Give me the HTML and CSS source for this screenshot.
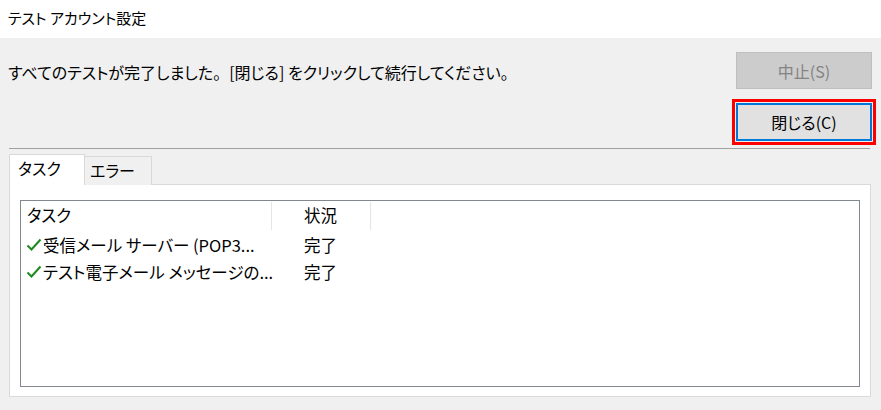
FILE: index.html
```html
<!DOCTYPE html>
<html lang="ja">
<head>
<meta charset="utf-8">
<title>テスト アカウント設定</title>
<link rel="stylesheet" href="styles.css">
</head>
<body>
<div class="window">
  <div class="titlebar">テスト アカウント設定</div>
  <div class="content">
    <div class="top-row">
      <div class="message">すべてのテストが完了しました<span class="fullstop">。</span>[閉じる] をクリックして続行してください。</div>
      <button class="btn btn-disabled" disabled>中止(S)</button>
    </div>
    <div class="close-row">
      <button class="btn btn-default">閉じる(C)</button>
    </div>
    <div class="separator"></div>
    <div class="tabs">
      <div class="tab tab-active">タスク</div>
      <div class="tab">エラー</div>
    </div>
    <div class="panel">
      <div class="list">
        <div class="list-header">
          <div class="col col-task">タスク</div>
          <div class="col col-status">状況</div>
        </div>
        <div class="list-row">
          <div class="col col-task"><svg class="check" viewBox="0 0 16 14" width="16" height="14"><path d="M1.5 7.5 L5.5 11.5 L14.5 1.5" fill="none" stroke="#1c8a1c" stroke-width="2"/></svg><span>受信メール サーバー (POP3...</span></div>
          <div class="col col-status">完了</div>
        </div>
        <div class="list-row">
          <div class="col col-task"><svg class="check" viewBox="0 0 16 14" width="16" height="14"><path d="M1.5 7.5 L5.5 11.5 L14.5 1.5" fill="none" stroke="#1c8a1c" stroke-width="2"/></svg><span>テスト電子メール メッセージの...</span></div>
          <div class="col col-status">完了</div>
        </div>
      </div>
    </div>
  </div>
</div>
</body>
</html>
```

FILE: styles.css
```css
* { box-sizing: border-box; }
html, body {
  margin: 0;
  padding: 0;
  background: #f0f0f0;
}
body {
  font-family: "Noto Sans CJK JP", "Noto Sans", sans-serif;
  font-feature-settings: "palt";
  color: #000;
  font-size: 16px;
  width: 881px;
  height: 410px;
  overflow: hidden;
}
.titlebar {
  height: 38px;
  background: #fff;
  padding: 0 0 3px 8px;
  display: flex;
  align-items: center;
  font-size: 15px;
}
.content {
  padding: 14px 0 0 0;
}
.top-row {
  display: flex;
  align-items: center;
  justify-content: space-between;
  padding: 0 9px 0 8px;
}
.message {
  line-height: 20px;
  margin-top: 2px;
}
.fullstop {
  font-feature-settings: normal;
}
.btn {
  width: 136px;
  height: 37px;
  font-family: inherit;
  font-feature-settings: "palt";
  font-size: 16px;
  padding: 0;
  margin: 0;
}
.btn-disabled {
  background: #cccccc;
  border: 1px solid #bfbfbf;
  color: #838383;
}
.close-row {
  display: flex;
  justify-content: flex-end;
  padding: 14px 9px 0 0;
}
.btn-default {
  background: #e1e1e1;
  border: 2px solid #0078d7;
  color: #000;
  height: 38px;
  outline: 3px solid #ff0000;
  outline-offset: 1px;
}
.separator {
  height: 1px;
  background: #a0a0a0;
  margin: 7px 11px 0 9px;
}
.tabs {
  display: flex;
  align-items: flex-end;
  margin: 5px 0 0 9px;
  height: 31px;
  position: relative;
  z-index: 1;
  margin-bottom: -1px;
}
.tab {
  height: 29px;
  border: 1px solid #d9d9d9;
  border-bottom: none;
  background: #f0f0f0;
  padding: 0 10px 2px 5px;
  display: flex;
  align-items: center;
  width: 68px;
  margin-left: -1px;
}
.tab-active {
  height: 31px;
  background: #fff;
  width: 76px;
  margin-left: 0;
  padding: 0 0 4px 8px;
}
.panel {
  margin: 0 10px 0 9px;
  height: 213px;
  background: #fff;
  border: 1px solid #d9d9d9;
  padding: 15px 10px 9px 10px;
}
.list {
  height: 187px;
  border: 1px solid #828790;
  background: #fff;
  font-size: 16.5px;
}
.list-header {
  display: flex;
  height: 30px;
  align-items: stretch;
  padding-top: 1px;
}
.list-header .col {
  display: flex;
  align-items: center;
  border-right: 1px solid #e5e5e5;
  height: 28px;
  padding-bottom: 2px;
}
.col-task {
  width: 251px;
  padding-left: 6px;
}
.col-status {
  width: 99px;
  padding-left: 32px;
}
.list-row {
  display: flex;
  height: 27px;
  align-items: center;
}
.list-row .col-task {
  display: flex;
  align-items: center;
  padding-left: 5px;
  white-space: nowrap;
}
.check {
  flex: none;
  margin-right: 1px;
  margin-top: 1px;
}
```
